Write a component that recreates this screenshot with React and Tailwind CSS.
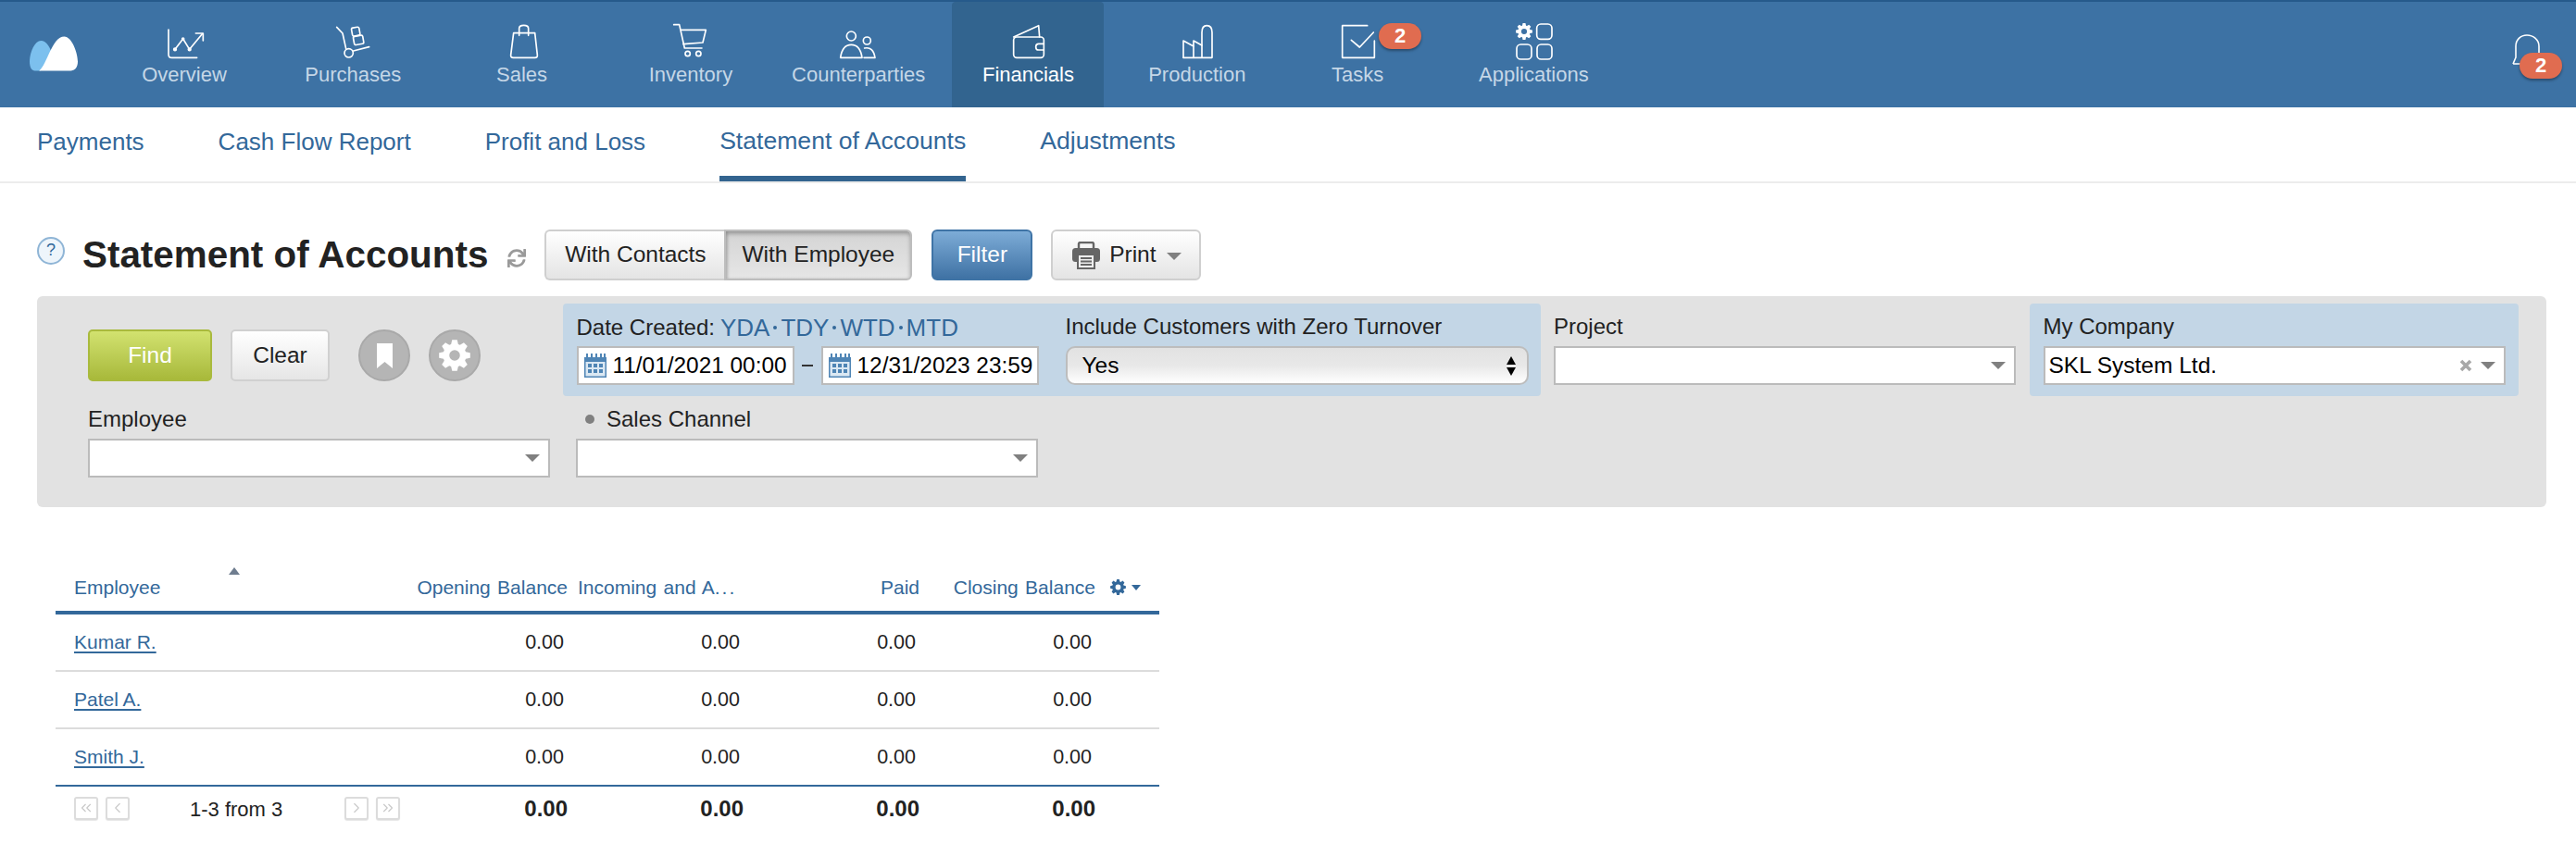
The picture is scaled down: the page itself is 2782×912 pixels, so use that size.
import React from 'react';
import { FaSync } from 'react-icons/fa';
import { ChevronLeft, ChevronRight, ChevronsLeft, ChevronsRight } from 'lucide-react';

const FONT = { fontFamily: '"Liberation Sans", Arial, sans-serif' };

function Gear({ cx, cy, s = 1, fill = '#fff' }) {
  const teeth = 8;
  const pts = [];
  for (let i = 0; i < teeth; i++) {
    const a = (i / teeth) * Math.PI * 2;
    const w = Math.PI / teeth / 1.7;
    const p = (r, t) => `${(cx + Math.cos(t) * r * s).toFixed(2)} ${(cy + Math.sin(t) * r * s).toFixed(2)}`;
    pts.push(p(0.74, a - w * 1.35), p(1, a - w * 0.7), p(1, a + w * 0.7), p(0.74, a + w * 1.35));
  }
  const d = 'M' + pts.join('L') + 'Z';
  const r = 0.34 * s;
  const hole = `M${cx + r} ${cy}A${r} ${r} 0 1 0 ${cx - r} ${cy}A${r} ${r} 0 1 0 ${cx + r} ${cy}Z`;
  return <path d={d + hole} fill={fill} fillRule="evenodd" stroke="none" />;
}

function NavIcon({ center, children }) {
  return (
    <svg width="80" height="45" viewBox={`${center - 120} 0 240 135`} fill="none" stroke="#fff" strokeWidth="5" strokeLinecap="round" strokeLinejoin="round">
      {children}
    </svg>
  );
}

const icons = {
  Overview: (
    <NavIcon center={536}>
      <path d="M485 36V116Q485 127 496 127H577" />
      <path d="M506 100L532 66L553 100L594 50" />
      <path d="M573 48H597V72" />
      <circle cx="506" cy="100" r="4" fill="#fff" />
      <circle cx="553" cy="100" r="4" fill="#fff" />
      <circle cx="532" cy="66" r="3" fill="#fff" />
    </NavIcon>
  ),
  Purchases: (
    <NavIcon center={1083}>
      <path d="M1031 28L1050 48L1061 98" />
      <circle cx="1070" cy="112" r="14" />
      <path d="M1085 105L1136 92" />
      <rect x="1080" y="29" width="25" height="27" rx="5" transform="rotate(-10 1092 42)" />
      <rect x="1086" y="56" width="31" height="28" rx="5" transform="rotate(-10 1101 70)" />
    </NavIcon>
  ),
  Sales: (
    <NavIcon center={1627}>
      <path d="M1599 47H1668L1676 118Q1677 127 1668 127H1598Q1589 127 1590 118Z" />
      <path d="M1617 55V32Q1617 22 1632 22Q1647 22 1647 32V55" />
    </NavIcon>
  ),
  Inventory: (
    <NavIcon center={132}>
      <path d="M77 20H95L112 96H168" />
      <path d="M101 37H181L171 78L108 83" />
      <circle cx="122" cy="114" r="8" />
      <circle cx="157" cy="114" r="8" />
    </NavIcon>
  ),
  Counterparties: (
    <NavIcon center={680}>
      <circle cx="657" cy="57" r="15" />
      <path d="M622 127Q628 85 657 85Q686 85 692 127Z" />
      <circle cx="708" cy="72" r="12" />
      <path d="M700 96Q728 90 734 127H698" />
    </NavIcon>
  ),
  Financials: (
    <NavIcon center={1230}>
      <rect x="1184" y="60" width="98" height="67" rx="10" />
      <path d="M1184 60L1265 23L1268 60" />
      <path d="M1282 82H1265Q1256 82 1256 92Q1256 102 1265 102H1282" />
    </NavIcon>
  ),
  Production: (
    <NavIcon center={215}>
      <path d="M170 127H263V45Q263 23 246 23Q230 23 230 45V127" />
      <path d="M170 127V72L203 90V72L230 87" />
      <path d="M203 90V127" />
    </NavIcon>
  ),
  Tasks: (
    <NavIcon center={738}>
      <path d="M770 23H689V127H793V72" />
      <path d="M718 70L745 93L790 45" />
    </NavIcon>
  ),
  Applications: (
    <NavIcon center={1308}>
      <Gear cx={1278} cy={42} s={27} />
      <rect x="1319" y="18" width="49" height="49" rx="13" />
      <rect x="1254" y="84" width="48" height="48" rx="13" />
      <rect x="1320" y="84" width="48" height="48" rx="13" />
    </NavIcon>
  ),
};

const navItems = [
  ['Overview', 'w-[164px]'],
  ['Purchases', 'w-[164px]'],
  ['Sales', 'w-[164px]'],
  ['Inventory', 'w-[164px]'],
  ['Counterparties', 'w-[162px]'],
  ['Financials', 'w-[164px]'],
  ['Production', 'w-[164px]'],
  ['Tasks', 'w-[146px]'],
  ['Applications', 'w-[198px]'],
];

function Badge({ className }) {
  return (
    <div className={`absolute flex h-[28px] w-[46px] items-center justify-center rounded-[14px] bg-[#e06c50] text-[22px] font-bold leading-none text-white shadow-[0_2px_3px_rgba(0,0,0,0.35)] ${className}`}>
      2
    </div>
  );
}

function TopNav() {
  return (
    <header className="flex h-[116px] border-t-2 border-[#265a8b] bg-[#3d72a4]">
      <svg className="ml-[32px] mt-[37px] shrink-0" width="52" height="38" viewBox="35 58 157 112">
        <path d="M35 140C35 110 52 72 72 72C90 72 102 95 110 118L70 170H52C42 170 35 160 35 140Z" fill="#7cc0ee" />
        <path d="M66 170C92 150 108 58 148 58C172 58 192 110 192 140C192 160 182 170 168 170Z" fill="#fff" />
      </svg>
      <nav className="ml-[33px] flex gap-[18.3px]">
        {navItems.map(([name, w]) => {
          const active = name === 'Financials';
          return (
            <div key={name} className={`relative flex h-full flex-col items-center pt-[18px] ${w} ${active ? 'ml-[2px] rounded-t-[4px] bg-[#32648f]' : ''}`}>
              {icons[name]}
              <span className={`mt-[3px] whitespace-nowrap text-[22px] leading-[26px] ${active ? 'text-white' : 'text-[#c5d7e7]'}`}>{name}</span>
              {name === 'Tasks' && <Badge className="left-[96px] top-[23px]" />}
            </div>
          );
        })}
      </nav>
      <div className="relative ml-auto mr-[15px] mt-[35px] h-[50px] w-[54px]">
        <svg width="32" height="34" viewBox="0 0 32 34" fill="none" stroke="#fff" strokeWidth="1.6">
          <path d="M1 32L4 25V13C4 6 9 1 16 1C23 1 29 6 29 13V25M1 32H14" strokeLinejoin="round" />
        </svg>
        <Badge className="left-[8px] top-[20px]" />
      </div>
    </header>
  );
}

function SubTabs() {
  const tabs = [
    ['Payments', 'text-[26px] border-transparent'],
    ['Cash Flow Report', 'text-[26px] border-transparent'],
    ['Profit and Loss', 'text-[26px] border-transparent'],
    ['Statement of Accounts', 'text-[26.6px] border-[#33648f]'],
    ['Adjustments', 'text-[26.6px] border-transparent'],
  ];
  return (
    <div className="flex h-[82px] gap-20 border-b-2 border-[#ececec] pl-10">
      {tabs.map(([t, c]) => (
        <div key={t} className={`flex h-[80px] items-center whitespace-nowrap border-b-[6px] text-[#33689a] ${c}`}>
          {t}
        </div>
      ))}
    </div>
  );
}

function Printer() {
  return (
    <svg width="32" height="30" viewBox="0 0 32 30">
      <path d="M8 8V2.5Q8 1 10 1H22Q24 1 24 2.5V8" fill="none" stroke="#666" strokeWidth="2.4" />
      <rect x="1" y="7" width="30" height="15" rx="3.5" fill="#666" />
      <rect x="7" y="14" width="18" height="15" fill="#eee" stroke="#666" strokeWidth="2" />
      <path d="M10 18H22M10 21.5H22M10 25H22" stroke="#666" strokeWidth="1.8" />
    </svg>
  );
}

function TitleRow() {
  const btn = 'flex h-[55px] items-center justify-center text-[24.5px] text-[#222]';
  return (
    <div className="mt-[50px] flex h-[55px] items-center pl-10">
      <div className="mb-[10px] flex h-[30px] w-[30px] shrink-0 items-center justify-center rounded-full border-2 border-[#8fb5d6] bg-[#eef5fb] text-[18px] text-[#33689a]">?</div>
      <h1 className="ml-[19px] whitespace-nowrap text-[40.4px] font-bold leading-none text-[#222]">Statement of Accounts</h1>
      <FaSync className="ml-[21px] mt-[6px] shrink-0 text-[#9a9a9a]" size={20} />
      <div className="ml-[20px] flex">
        <div className={`${btn} w-[194px] rounded-l-[6px] border-2 border-r-0 border-[#cfcfcf] bg-linear-to-b from-white to-[#e4e4e4]`}>With Contacts</div>
        <div className={`${btn} w-[203px] rounded-r-[6px] border-2 border-[#bdbdbd] bg-linear-to-b from-[#d4d4d4] to-[#e6e6e6] shadow-[inset_0_3px_4px_rgba(0,0,0,0.25),inset_2px_0_3px_rgba(0,0,0,0.12)]`}>With Employee</div>
      </div>
      <div className={`${btn} ml-[21px] w-[109px] rounded-[6px] border-2 border-[#3f74a6] bg-linear-to-b from-[#7dacd7] to-[#3f72a4] text-white`}>Filter</div>
      <div className={`${btn} ml-[20px] w-[162px] rounded-[6px] border-2 border-[#cfcfcf] bg-linear-to-b from-white to-[#e4e4e4]`}>
        <Printer />
        <span className="ml-[9px]">Print</span>
        <span className="ml-[11px] mt-[3px] h-0 w-0 border-x-[8.5px] border-t-[8px] border-x-transparent border-t-[#808080]" />
      </div>
    </div>
  );
}

function Caret({ className = '' }) {
  return <span className={`h-0 w-0 border-x-[8px] border-t-[8px] border-x-transparent border-t-[#808080] ${className}`} />;
}

function Combo({ value, clear, className = '' }) {
  return (
    <div className={`flex h-[42px] items-center border-2 border-[#bbb] bg-white pl-[4px] pr-[9px] text-[24.5px] text-black ${className}`}>
      <span className="flex-1 whitespace-nowrap">{value}</span>
      {clear && (
        <svg className="mr-[9px]" width="14" height="14" viewBox="0 0 14 14">
          <path d="M2 2L12 12M12 2L2 12" stroke="#a8a8a8" strokeWidth="3.6" />
        </svg>
      )}
      <Caret />
    </div>
  );
}

function Calendar() {
  return (
    <svg className="shrink-0" width="24" height="26" viewBox="0 0 24 26">
      <rect x="0" y="4" width="24" height="22" fill="#4f85b5" />
      <path d="M3 0V6M8 0V6M13 0V6M18 0V6M22 0V6" stroke="#4f85b5" strokeWidth="2" />
      <rect x="1.5" y="9" width="21" height="15.5" fill="#dbe8f3" />
      {[4, 10, 16].map((x) => [11, 17].map((y) => <rect key={`${x}${y}`} x={x} y={y} width="4" height="4" fill="#4f85b5" />))}
    </svg>
  );
}

function DateInput({ value }) {
  return (
    <div className="flex h-[42px] w-[235px] items-center border-2 border-[#bbb] bg-white pl-[6px] text-[24.4px] text-black">
      <Calendar />
      <span className="ml-[7px] whitespace-nowrap">{value}</span>
    </div>
  );
}

function Label({ children, className = '' }) {
  return <div className={`flex h-[46px] items-center whitespace-nowrap pt-[4px] text-[24px] text-[#222] ${className}`}>{children}</div>;
}

function Dot() {
  return <i className="mx-[4px] h-[4px] w-[4px] rounded-full bg-[#33689a]" />;
}

function FilterPanel() {
  return (
    <section className="ml-10 mt-[17px] h-[228px] w-[2710px] rounded-[6px] bg-[#e2e2e2] pt-[8px]">
      <div className="flex h-[100px]">
        <div className="flex w-[568px] items-start gap-0 pl-[55px] pt-[28px]">
          <div className="flex h-[56px] w-[134px] items-center justify-center rounded-[5px] border-2 border-[#a9ba3d] bg-linear-to-b from-[#d2e26f] to-[#a8b93a] text-[24.5px] text-white">Find</div>
          <div className="ml-[20px] flex h-[56px] w-[107px] items-center justify-center rounded-[5px] border-2 border-[#d0d0d0] bg-linear-to-b from-white to-[#e6e6e6] text-[24.5px] text-[#222]">Clear</div>
          <div className="ml-[31px] flex h-[56px] w-[56px] items-center justify-center rounded-full border-2 border-[#a9a9a9] bg-[#b5b5b5]">
            <svg width="17" height="27" viewBox="0 0 17 27"><path d="M0 0H17V27L8.5 20L0 27Z" fill="#fff" /></svg>
          </div>
          <div className="ml-[20px] flex h-[56px] w-[56px] items-center justify-center rounded-full border-2 border-[#a9a9a9] bg-[#b5b5b5]">
            <svg width="34" height="34" viewBox="0 0 34 34"><Gear cx={17} cy={17} s={17} /></svg>
          </div>
        </div>
        <div className="flex w-[1056px] rounded-[4px] bg-[#c3d6e6] pl-[14.5px]">
          <div className="w-[499px]">
            <Label className="pt-[6px]">
              Date Created:
              <span className="ml-[6px] flex items-center text-[26px] text-[#33689a]">
                YDA<Dot />TDY<Dot />WTD<Dot />MTD
              </span>
            </Label>
            <div className="flex items-center justify-between">
              <DateInput value="11/01/2021 00:00" />
              <span className="h-[2px] w-[12px] bg-[#333]" />
              <DateInput value="12/31/2023 23:59" />
            </div>
          </div>
          <div className="ml-[29px] w-[500px]">
            <Label>Include Customers with Zero Turnover</Label>
            <div className="flex h-[42px] items-center rounded-[10px] border-2 border-[#bdbdbd] bg-linear-to-b from-[#e2e2e2] via-[#e8e8e8] to-white pl-[16px] pr-[12px] text-[24.5px] text-black">
              <span className="flex-1">Yes</span>
              <span className="flex flex-col gap-[3px]">
                <i className="h-0 w-0 border-x-[5.5px] border-b-[9px] border-x-transparent border-b-black" />
                <i className="h-0 w-0 border-x-[5.5px] border-t-[9px] border-x-transparent border-t-black" />
              </span>
            </div>
          </div>
        </div>
        <div className="ml-[14px] w-[499px]">
          <Label>Project</Label>
          <Combo />
        </div>
        <div className="ml-[15px] w-[528px] rounded-[4px] bg-[#c3d6e6] px-[14.5px]">
          <Label>My Company</Label>
          <Combo value="SKL System Ltd." clear />
        </div>
      </div>
      <div className="flex pl-[55px]">
        <div className="w-[499px]">
          <Label>Employee</Label>
          <Combo />
        </div>
        <div className="ml-[28px] w-[499px]">
          <Label>
            <i className="ml-[10px] mr-[13px] h-[10px] w-[10px] rounded-full bg-[#808080]" />
            Sales Channel
          </Label>
          <Combo />
        </div>
      </div>
    </section>
  );
}

const grid = 'grid grid-cols-[380px_173px_190px_190px_190px_69px]';

function Pager({ Icon }) {
  return (
    <span className="flex h-[25px] w-[26px] items-center justify-center rounded-[3px] border-2 border-[#dcdcdc] bg-white shadow-[0_1px_1px_rgba(0,0,0,0.1)]">
      <Icon size={18} color="#c8c8c8" strokeWidth={1.5} />
    </span>
  );
}

function DataTable() {
  const rows = ['Kumar R.', 'Patel A.', 'Smith J.'];
  const num = 'pr-[4px] text-right text-[21.5px] text-[#222]';
  const tot = 'pb-[2px] text-right text-[24px] font-bold text-[#222]';
  return (
    <section className="ml-[60px] w-[1192px]">
      <div className={`${grid} relative mt-[65px] h-[51px] items-center border-b-4 border-[#33689a] pb-[8px] text-[21px] text-[#33689a] [word-spacing:1.5px]`}>
        <div className="relative h-full pl-[20px] leading-[43px]">
          Employee
          <span className="absolute left-[187px] top-[0px] h-0 w-0 border-x-[6px] border-b-[8px] border-x-transparent border-b-[#6f7d8f]" />
        </div>
        <div className="whitespace-nowrap text-right">Opening Balance</div>
        <div className="whitespace-nowrap pl-[11px]">Incoming and A<span className="tracking-[2px]">...</span></div>
        <div className="text-right">Paid</div>
        <div className="whitespace-nowrap text-right">Closing Balance</div>
        <div className="flex items-center pl-[16px]">
          <svg width="17" height="17" viewBox="0 0 34 34"><Gear cx={17} cy={17} s={17} fill="#33689a" /></svg>
          <span className="ml-[6px] h-0 w-0 border-x-[5px] border-t-[6px] border-x-transparent border-t-[#33689a]" />
        </div>
      </div>
      {rows.map((r, i) => (
        <div key={r} className={`${grid} h-[62px] items-center border-b-2 ${i === 2 ? 'border-[#33689a]' : 'border-[#dcdcdc]'}`}>
          <a className="pl-[20px] text-[21px] text-[#33689a] underline underline-offset-[3px]">{r}</a>
          <div className={num}>0.00</div>
          <div className={num}>0.00</div>
          <div className={num}>0.00</div>
          <div className={num}>0.00</div>
        </div>
      ))}
      <div className={`${grid} h-[50px] items-center`}>
        <div className="flex items-center pb-[4px] pl-[20px] text-[22px] text-[#222]">
          <Pager Icon={ChevronsLeft} />
          <span className="ml-[8px]"><Pager Icon={ChevronLeft} /></span>
          <span className="ml-[65px] w-[167px] whitespace-nowrap pt-[3px]">1-3 from 3</span>
          <Pager Icon={ChevronRight} />
          <span className="ml-[8px]"><Pager Icon={ChevronsRight} /></span>
        </div>
        <div className={tot}>0.00</div>
        <div className={tot}>0.00</div>
        <div className={tot}>0.00</div>
        <div className={tot}>0.00</div>
      </div>
    </section>
  );
}

export default function App() {
  return (
    <div className="h-[912px] w-[2782px] overflow-hidden bg-white" style={FONT}>
      <TopNav />
      <SubTabs />
      <TitleRow />
      <FilterPanel />
      <DataTable />
    </div>
  );
}
